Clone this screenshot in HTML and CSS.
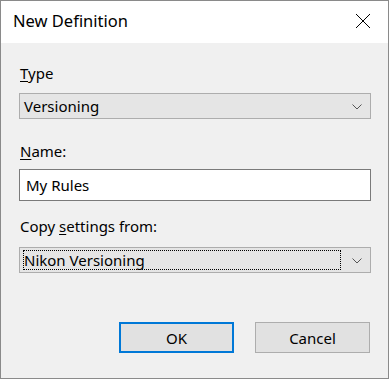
FILE: index.html
```html
<!DOCTYPE html>
<html>
<head>
  <meta charset="utf-8">
  <title>New Definition</title>
  <link rel="stylesheet" href="styles.css">
</head>
<body>
  <div class="dialog">
    <!-- Title bar -->
    <div class="titlebar">
      <span class="title">New Definition</span>
      <span class="close">
        <svg width="16" height="16" viewBox="0 0 16 16">
          <path d="M1 1 L15 15 M15 1 L1 15" stroke="#000" stroke-width="1" fill="none"/>
        </svg>
      </span>
    </div>

    <!-- Form -->
    <div class="content">
      <div class="label label-type"><u>T</u>ype</div>
      <div class="combo">
        <span class="combo-text">Versioning</span>
        <svg class="chevron" width="10" height="6" viewBox="0 0 10 6">
          <path d="M0.5 0.5 L5 5 L9.5 0.5" stroke="#555" stroke-width="1" fill="none"/>
        </svg>
      </div>

      <div class="label label-name"><u>N</u>ame:</div>
      <div class="textbox">My Rules</div>

      <div class="label label-copy">Copy <u>s</u>ettings from:</div>
      <div class="combo combo-focus">
        <span class="combo-text focus-rect">Nikon Versioning</span>
        <svg class="chevron" width="10" height="6" viewBox="0 0 10 6">
          <path d="M0.5 0.5 L5 5 L9.5 0.5" stroke="#555" stroke-width="1" fill="none"/>
        </svg>
      </div>

      <div class="buttons">
        <button type="button" class="btn btn-default">OK</button>
        <button type="button" class="btn">Cancel</button>
      </div>
    </div>
  </div>
</body>
</html>
```

FILE: styles.css
```css
html, body {
  margin: 0;
  padding: 0;
}

body {
  background-color: #f0f0f0;
  font-family: "Noto Sans", "Open Sans", sans-serif;
  font-size: 15px;
  color: #000;
}

.dialog {
  width: 387px;
  height: 377px;
  border: 1px solid #8a8a8a;
  background-color: #f0f0f0;
  display: flex;
  flex-direction: column;
}

.titlebar {
  height: 42px;
  background-color: #fff;
  display: flex;
  align-items: center;
  justify-content: space-between;
  padding: 0 17px 0 12px;
}

.title {
  font-size: 16.5px;
  padding-bottom: 4px;
}

.close {
  display: flex;
  padding-bottom: 2px;
}

.content {
  padding: 20px 17px 0 18px;
  display: flex;
  flex-direction: column;
}

.label {
  height: 20px;
  line-height: 20px;
  padding-left: 1px;
}

.label u {
  text-decoration-thickness: 1px;
  text-underline-offset: 2px;
}

.label-name {
  margin-top: 22px;
}

.label-copy {
  margin-top: 15px;
}

.combo {
  margin-top: 10px;
  height: 24px;
  border: 1px solid #adadad;
  background-color: #e5e5e5;
  display: flex;
  align-items: center;
  justify-content: space-between;
  padding: 0 8px 0 3px;
}

.combo-focus {
  margin-top: 11px;
}

.combo-text {
  line-height: 20px;
  padding: 0 1px;
}

.focus-rect {
  width: 316px;
  outline: 1px dotted #000;
  outline-offset: -1px;
  padding-left: 1px;
}

.chevron {
  margin-top: 1px;
}

.textbox {
  margin-top: 8px;
  height: 30px;
  line-height: 30px;
  border: 1px solid #7a7a7a;
  background-color: #fff;
  padding-left: 6px;
}

.buttons {
  margin-top: 49px;
  display: flex;
  justify-content: flex-end;
  gap: 21px;
  padding-right: 1px;
}

.btn {
  width: 115px;
  height: 31px;
  border: 1px solid #adadad;
  background-color: #e1e1e1;
  font-family: "Noto Sans", "Open Sans", sans-serif;
  font-size: 15px;
  color: #000;
  padding: 0;
}

.btn-default {
  border: 2px solid #0078d7;
}
```
